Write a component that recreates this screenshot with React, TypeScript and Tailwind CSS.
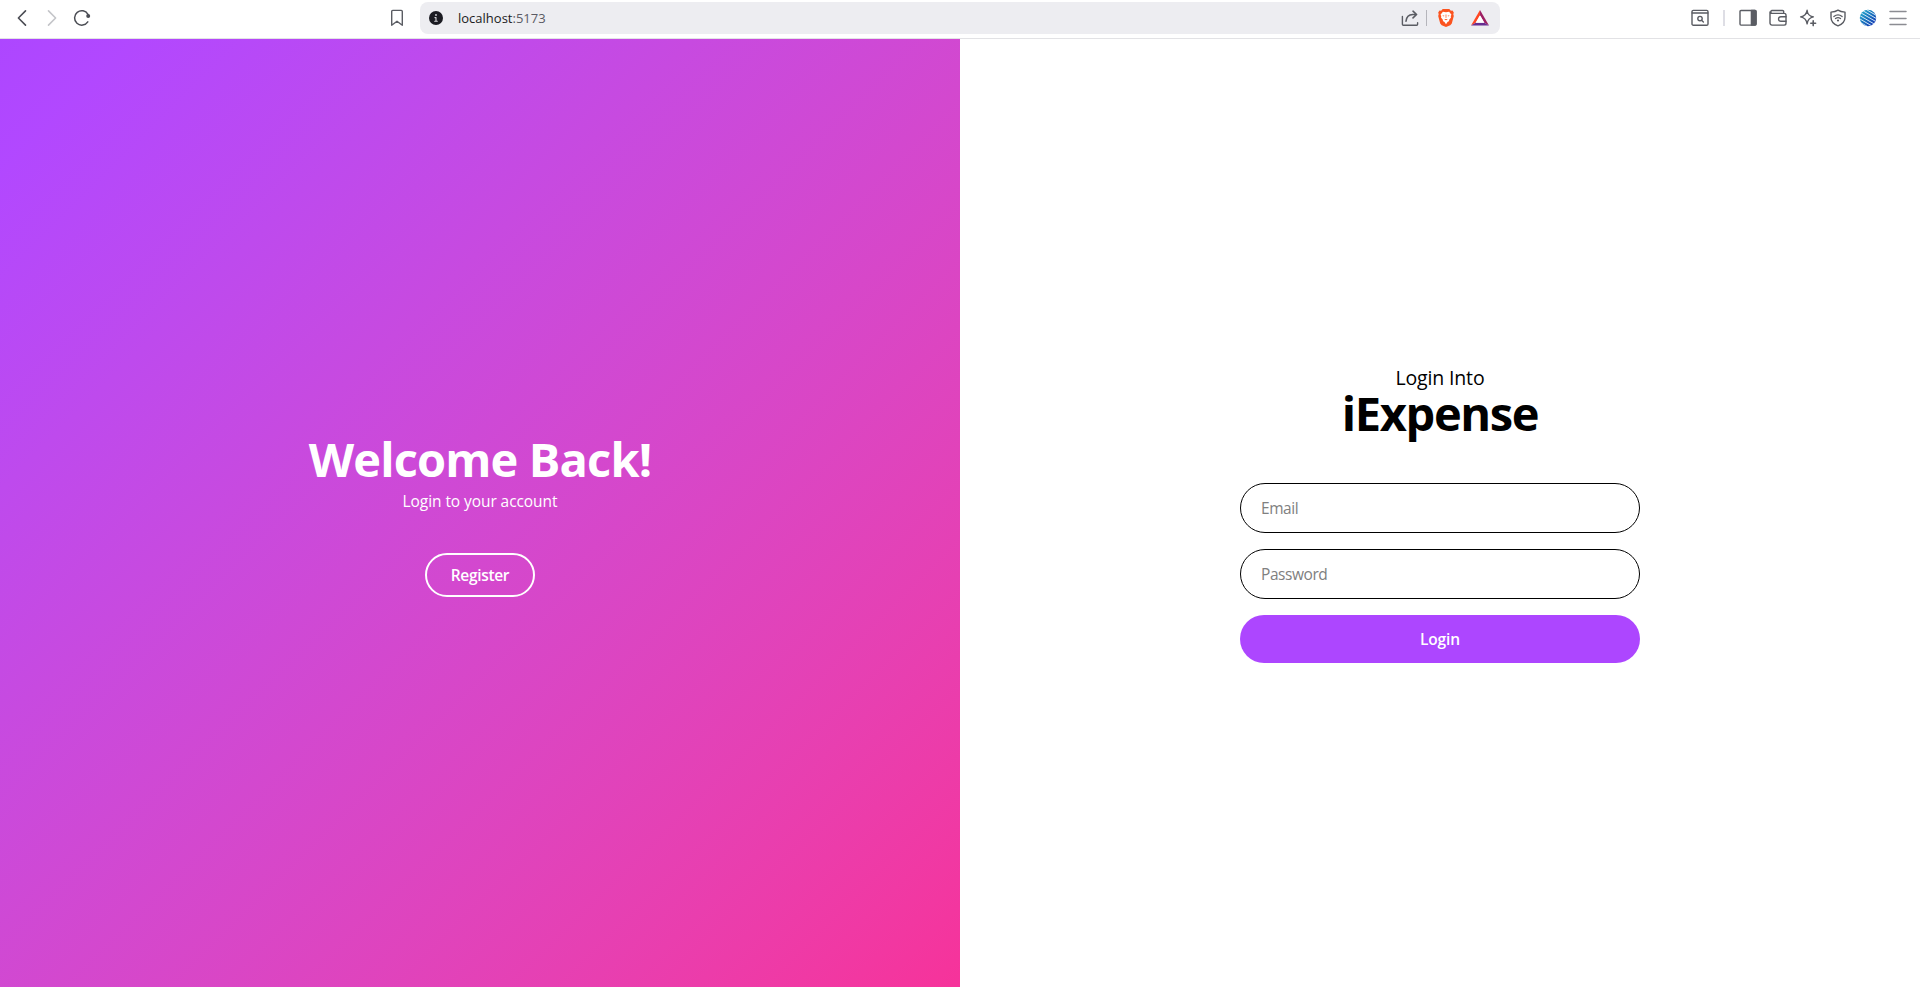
import type { ReactNode } from "react";

type IconProps = { children: ReactNode; className?: string };

function Icon({ children, className = "" }: IconProps) {
  return (
    <svg
      viewBox="0 0 18 18"
      className={`h-[18px] w-[18px] shrink-0 fill-none stroke-current ${className}`}
      strokeWidth="1.4"
      strokeLinecap="round"
      strokeLinejoin="round"
    >
      {children}
    </svg>
  );
}

function BrowserBar() {
  return (
    <header className="flex h-[39px] shrink-0 items-center border-b border-[#e2e2e5] bg-white pr-[13px] pb-[2px] pl-[13px] text-[#5a5c63]">
      <div className="flex w-[407px] items-center">
        <Icon className="text-[#4b4d54]">
          <path d="M12.5 1.9 5.4 9l7.1 7.1" strokeWidth="1.6" />
        </Icon>
        <Icon className="ml-[12px] text-[#c4c5c9]">
          <path d="M5.5 1.9 12.6 9l-7.1 7.1" strokeWidth="1.6" />
        </Icon>
        <Icon className="ml-[12px] text-[#4b4d54]">
          <path d="M14.8 12.9A7.2 7.2 0 1 1 15 5.3" strokeWidth="1.5" />
          <circle cx="15.2" cy="7" r="2" fill="currentColor" stroke="none" />
        </Icon>
        <Icon className="mr-[14px] ml-auto">
          <path d="M4.7 1.4h8.6a1 1 0 0 1 1 1v13.8L9 12.3l-5.3 3.9V2.4a1 1 0 0 1 1-1Z" />
        </Icon>
      </div>

      <div className="flex h-8 w-[1080px] items-center rounded-lg bg-[#ededf1] pr-[11px] pl-[7px]">
        <Icon>
          <circle cx="9" cy="9" r="7" fill="#1b1b22" stroke="none" />
          <path d="M9 8.6v3.6M7.9 8.6H9M7.7 12.3h2.6" stroke="#d5d5da" strokeWidth="1.1" />
          <circle cx="9" cy="6" r="0.9" fill="#d5d5da" stroke="none" />
        </Icon>
        <span className="ml-[13px] text-[13px] leading-4 text-[#1b1b22]">
          localhost<span className="text-[#5a5a63]">:5173</span>
        </span>
        <Icon className="ml-auto">
          <path d="M1.4 7.4v7.9a.9.9 0 0 0 .9.9h13.4a.9.9 0 0 0 .9-.9v-1.6" />
          <path d="M5 12.3c.4-4.3 3-6.7 6.8-6.8H15M12 2.2l3.6 3.3L12 8.9" strokeWidth="1.6" />
        </Icon>
        <span className="ml-[7px] h-4 w-px bg-[#b5b5bb]" />
        <svg viewBox="0 0 18 18" className="ml-[10px] h-[18px] w-[18px]">
          <path d="M5.7 0h6.600l1.600 1.700 1.600-.2 1.300 2-.5 1.700.5 1.900-2 7.300-1.500 1.800L9 18l-4.300-1.800-1.500-1.800-2-7.300.5-1.900-.5-1.700 1.300-2 1.600.2Z" fill="#fb5420" />
          <path d="m5.900 2.700 3.100.5 3.100-.5 2.400 3-.8 1.400.3 1.400-2 2.500.2 1-1.700 1.100L9 15.200l-1.500-2.100L5.800 12l.2-1-2-2.500.3-1.400-.8-1.400Z" fill="#fff" />
          <path d="m5.200 6.200 2.300.5-.7.900Zm7.600 0-2.300.5.7.9ZM8.600 5.500h.8L9.300 9h-.6ZM7.100 10.500 9 9.900l1.900.6-1.900.8Z" fill="#fb5420" />
        </svg>
        <svg viewBox="0 0 18 16" className="ml-[16px] h-4 w-[18px]">
          <path d="M9 0 0 15.500 4.700 12.700 9 5.300Z" fill="#ff4724" />
          <path d="m9 0 9 15.500-4.700-2.800L9 5.300Z" fill="#9e1f63" />
          <path d="M0 15.500h18l-4.700-2.800H4.700Z" fill="#662d91" />
          <path d="m9 5.300 4.300 7.400H4.700Z" fill="#fff" />
        </svg>
      </div>

      <div className="ml-auto flex shrink-0 items-center">
        <Icon>
          <rect x="1" y="1.4" width="16" height="14.8" rx="1.3" />
          <path d="M1.200 4h15.600" />
          <circle cx="9" cy="9.600" r="2.200" />
          <path d="m10.800 11.400 1.600 1.500" />
        </Icon>
        <span className="ml-[14px] h-4 w-[2px] bg-[#dedee5]" />
        <Icon className="ml-[14px]">
          <rect x="1" y="1.500" width="16" height="14.600" rx="1" />
          <path d="M12.400 1.500H16a1 1 0 0 1 1 1v12.600a1 1 0 0 1-1 1h-3.600Z" fill="currentColor" />
        </Icon>
        <Icon className="ml-[12px]">
          <path d="M14.700 4.400V2.700a1.200 1.200 0 0 0-1.200-1.200H2.900a1.500 1.500 0 0 0 0 2.900h12.300A1.800 1.800 0 0 1 17 6.200v8.100a1.800 1.800 0 0 1-1.800 1.800H3a2 2 0 0 1-2-2V3" />
          <path d="M17 7.700h-5.200a2.300 2.300 0 0 0 0 4.600H17" />
        </Icon>
        <Icon className="ml-[12px]">
          <path d="M8.100 1.300c.5 3.900 1.700 5.700 6.300 6.600-4.600.9-5.800 3.200-6.300 7-.5-3.800-1.900-6.100-6.500-7 4.600-.9 6-2.700 6.500-6.600Z" />
          <path d="M14.200 11.800v4.800M11.800 14.200h4.800" strokeWidth="1.600" />
        </Icon>
        <Icon className="ml-[12px]">
          <path d="M9 1.100c1.800 1.300 4 1.900 7 2v5.100c0 4-2.400 6.900-7 8.700-4.600-1.800-7-4.700-7-8.700V3.100c3-.1 5.200-.7 7-2Z" />
          <path d="M4.900 7.500c2.400-1.900 5.800-1.900 8.200 0M6.500 9.500c1.500-1.100 3.500-1.100 5 0" strokeWidth="1.300" />
          <circle cx="9" cy="11.500" r="1.100" fill="currentColor" stroke="none" />
        </Icon>
        <svg viewBox="0 0 18 18" className="ml-[12px] h-[18px] w-[18px]">
          <defs>
            <linearGradient id="orb" x1="0" y1="0" x2="1" y2="1">
              <stop offset="0" stopColor="#29bcd4" />
              <stop offset=".5" stopColor="#1770bb" />
              <stop offset="1" stopColor="#1b22b4" />
            </linearGradient>
            <clipPath id="orb-clip">
              <circle cx="9" cy="9" r="8.200" />
            </clipPath>
          </defs>
          <g clipPath="url(#orb-clip)">
            <path d="M0 0h18v18H0Z" fill="url(#orb)" />
            <path d="m3-2 17 10M0-.5l19 11M-1 2.200l19 11M-2 5l19 11M-2 8.300l16 9.300M-2 11.500l13 7.500" stroke="#d3e8f7" strokeWidth="1" />
          </g>
        </svg>
        <Icon className="ml-[12px] text-[#8b8c92]">
          <path d="M1 2.500h16M1 9.500h16M1 15.500h16" strokeWidth="1.500" />
        </Icon>
      </div>
    </header>
  );
}

function WelcomePanel() {
  return (
    <section className="flex w-1/2 flex-col items-center justify-center bg-linear-to-br from-purple-500 to-pink-500 text-white">
      <h1 className="text-[47px] leading-[60px] font-bold tracking-[-0.85px]">Welcome Back!</h1>
      <p className="text-[15.5px] leading-6 tracking-[-0.08px]">Login to your account</p>
      <button className="mt-10 h-11 w-[110px] rounded-full border-2 border-white pt-0.5 text-[15.5px] font-semibold tracking-[-0.33px]">
        Register
      </button>
    </section>
  );
}

function LoginPanel() {
  return (
    <section className="flex w-1/2 flex-col items-center justify-center bg-white text-black">
      <h2 className="flex flex-col items-center pt-0.5">
        <span className="text-[19.5px] leading-[26px] tracking-[-0.15px]">Login Into</span>
        <span className="text-[47px] leading-[45px] font-bold tracking-[-1.35px]">iExpense</span>
      </h2>
      <form className="mt-[47px] flex w-[400px] flex-col gap-4 text-[15.5px]">
        <input
          type="email"
          placeholder="Email"
          className="h-[50px] rounded-full border border-black px-5 tracking-[-0.44px] placeholder:text-[#808080]"
        />
        <input
          type="password"
          placeholder="Password"
          className="h-[50px] rounded-full border border-black px-5 tracking-[-0.44px] placeholder:text-[#808080]"
        />
        <button
          type="button"
          className="h-12 rounded-full bg-purple-500 pt-0.5 font-semibold tracking-[-0.1px] text-white"
        >
          Login
        </button>
      </form>
    </section>
  );
}

export default function App() {
  return (
    <div className="flex h-screen flex-col overflow-hidden font-['Open_Sans','Noto_Sans',sans-serif]">
      <BrowserBar />
      <main className="flex flex-1">
        <WelcomePanel />
        <LoginPanel />
      </main>
    </div>
  );
}
